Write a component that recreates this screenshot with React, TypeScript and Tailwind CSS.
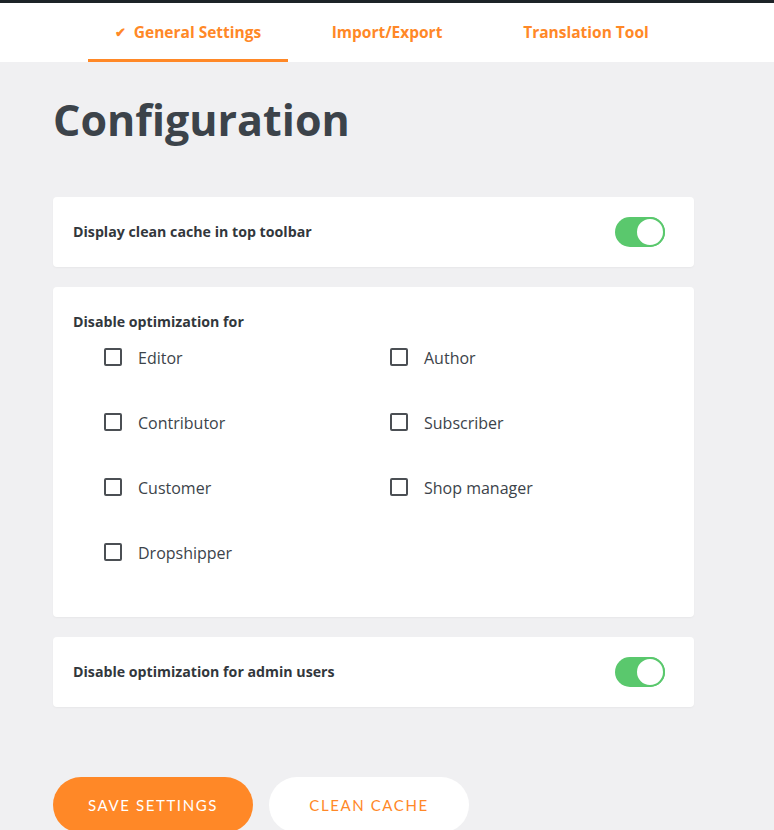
import { useState } from "react";

const roles = [
  ["Editor", "Author"],
  ["Contributor", "Subscriber"],
  ["Customer", "Shop manager"],
  ["Dropshipper", null],
];

function Toggle({ on, onChange }: { on: boolean; onChange: () => void }) {
  return (
    <button
      onClick={onChange}
      className={`flex h-[30px] w-[50px] shrink-0 items-center rounded-full p-0 ${
        on ? "justify-end bg-[#5ac86d]" : "justify-start bg-[#d5d5d8]"
      }`}
    >
      <span className="h-[30px] w-[30px] rounded-full border-2 border-[#5ac86d] bg-white" />
    </button>
  );
}

function Check({ label }: { label: string }) {
  const [checked, setChecked] = useState(false);
  return (
    <label className="flex cursor-pointer items-center gap-4">
      <span
        onClick={() => setChecked(!checked)}
        className={`h-[18px] w-[18px] shrink-0 rounded-[2px] border-2 border-[#4b4f54] ${
          checked ? "bg-[#ff8827]" : "bg-white"
        }`}
      />
      <span className="pt-[2px] text-[16px] leading-none text-[#3c434a]">{label}</span>
    </label>
  );
}

export default function App() {
  const [toolbar, setToolbar] = useState(true);
  const [admins, setAdmins] = useState(true);
  const tabs = ["General Settings", "Import/Export", "Translation Tool"];

  return (
    <div className="min-h-[830px] w-[774px] bg-[#f0f0f2] font-['Open_Sans',sans-serif]">
      <div className="h-[3px] bg-[#1d2327]" />
      <nav className="flex h-[59px] bg-white pl-[88px]">
        {tabs.map((t, i) => (
          <div
            key={t}
            className={`flex h-full items-center justify-center text-[15.5px] font-bold text-[#ff8827] ${
              i === 0
                ? "w-[200px] border-b-[3px] border-[#ff8827] pt-[3px]"
                : i === 1
                ? "w-[198px]"
                : "w-[200px]"
            }`}
          >
            {i === 0 && <span className="mr-[8px] text-[13px]">✔</span>}
            {t}
          </div>
        ))}
      </nav>

      <main className="pl-[53px]">
        <h1 className="pt-[32px] text-[43px] font-bold leading-[52px] text-[#3c434a]">
          Configuration
        </h1>

        <div className="mt-[51px] flex w-[641px] flex-col gap-5">
          <section className="flex h-[70px] items-center justify-between rounded bg-white pl-5 pr-[29px] shadow-[0_1px_2px_rgba(0,0,0,0.04)]">
            <span className="text-[14.2px] font-bold text-[#32373c]">
              Display clean cache in top toolbar
            </span>
            <Toggle on={toolbar} onChange={() => setToolbar(!toolbar)} />
          </section>

          <section className="rounded bg-white pb-[39px] pl-5 pt-[26px] shadow-[0_1px_2px_rgba(0,0,0,0.04)]">
            <div className="text-[14.2px] font-bold leading-[18px] text-[#32373c]">
              Disable optimization for
            </div>
            <div className="grid grid-cols-[286px_1fr] gap-y-[13px] pl-[31px]">
              {roles.map((row) =>
                row.map((r, j) => (
                  <div key={`${row[0]}-${j}`} className="flex h-[52px] items-center">
                    {r && <Check label={r} />}
                  </div>
                ))
              )}
            </div>
          </section>

          <section className="flex h-[70px] items-center justify-between rounded bg-white pl-5 pr-[29px] shadow-[0_1px_2px_rgba(0,0,0,0.04)]">
            <span className="text-[14.2px] font-bold text-[#32373c]">
              Disable optimization for admin users
            </span>
            <Toggle on={admins} onChange={() => setAdmins(!admins)} />
          </section>
        </div>

        <div className="mt-[70px] flex gap-4 font-['Lato',sans-serif]">
          <button className="h-[56px] w-[200px] rounded-full bg-[#ff8827] text-[15px] uppercase tracking-[1.6px] text-white">
            Save Settings
          </button>
          <button className="h-[56px] w-[200px] rounded-full bg-white text-[15px] uppercase tracking-[1.6px] text-[#ff8827]">
            Clean Cache
          </button>
        </div>
      </main>
    </div>
  );
}
